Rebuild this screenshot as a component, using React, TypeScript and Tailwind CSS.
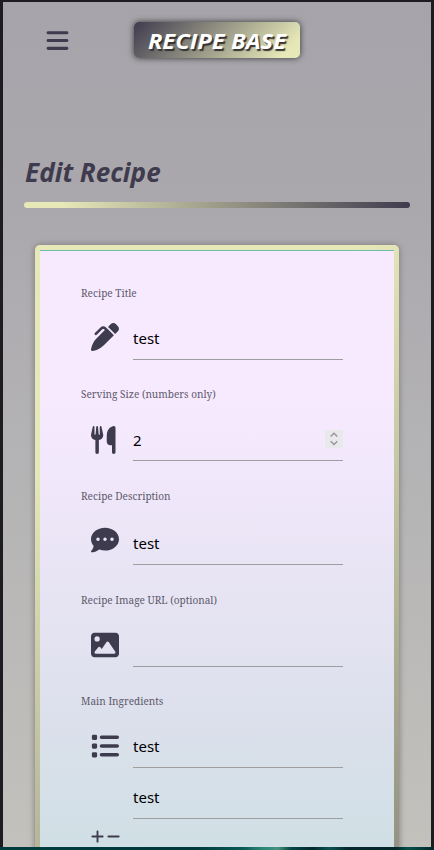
import type { ReactNode } from "react";
import { FaBars, FaPenClip, FaUtensils, FaCommentDots, FaImage, FaList, FaPlus, FaMinus } from "react-icons/fa6";

type FieldProps = {
  label: string;
  icon: ReactNode;
  iconPad: string;
  value: string;
  rowHeight: string;
  gap: string;
  stepper?: boolean;
};

function Field({ label, icon, iconPad, value, rowHeight, gap, stepper }: FieldProps) {
  return (
    <div className={gap}>
      <div className="h-4 whitespace-nowrap pl-[0.6px] font-['Noto_Serif','DejaVu_Serif_Condensed','DejaVu_Serif',serif] text-[10.5px] font-normal leading-4 text-[#5d596b]">
        <span className="inline-block origin-left scale-x-[0.957]">{label}</span>
      </div>
      <div className={`flex ${rowHeight}`}>
        <div className={`ml-[11px] w-[42px] shrink-0 text-[28px] text-[#3f3b4e] ${iconPad}`}>{icon}</div>
        <Line value={value} stepper={stepper} />
      </div>
    </div>
  );
}

function Line({ value, stepper }: { value: string; stepper?: boolean }) {
  return (
    <div className={`flex w-[210px] items-end justify-between border-b border-[#9e9e9e] font-['Noto_Sans',sans-serif] text-[15px] leading-[22px] text-black ${stepper ? "pb-[9px]" : "pb-[10px]"}`}>
      <span>{value}</span>
      {stepper && (
        <span className="mb-[3px] flex size-[18px] items-center justify-center bg-[#e9e8eb]">
          <svg width="8" height="14" viewBox="0 0 8 14" fill="none" stroke="#96939e" strokeWidth="1.4">
            <path d="M.7 4.5 4 1.3l3.3 3.2M.7 9.2 4 12.4l3.3-3.2" />
          </svg>
        </span>
      )}
    </div>
  );
}

export default function App() {
  return (
    <div className="h-[850px] w-[434px] overflow-hidden bg-[linear-gradient(90deg,#003c3e_0%,#00393d_45%,#0a5a56_56%,#268575_60%,#47927f_64%,#064646_67%,#03292e_72%,#0a5250_76%,#03292e_80%,#03262b_91%,#075049_94%,#03262b_100%)]">
      <div className="h-[847px] overflow-hidden border-x-[3px] border-t-2 border-[#1e1c20] bg-[linear-gradient(180deg,#a6a4aa_0%,#aba8ad_24%,#b3b2b4_52%,#c3c1bc_100%)]">
        <header className="flex h-[145px] items-start pl-[42px] pt-[20px]">
          <FaBars className="mt-[5.5px] size-[25px] text-[#3f3b4e]" />
          <div className="ml-16 flex h-9 w-[166px] items-center justify-center rounded-[5px] bg-[linear-gradient(135deg,#3f3b4e_0%,#e6e8b8_90%)] shadow-[0_0_6px_#333]">
            <span className="inline-block scale-x-[1.08] whitespace-nowrap font-['Open_Sans',sans-serif] text-[22px] font-bold italic leading-9 text-white [text-shadow:1.5px_1.5px_1px_#333]">RECIPE BASE</span>
          </div>
        </header>
        <div className="ml-[21px] w-[386px]">
          <h1 className="h-[55px] whitespace-nowrap pl-[1px] pt-[4px] font-['Open_Sans',sans-serif] text-[27px] font-bold italic leading-[41px] text-[#3f3b4e]">
            <span className="inline-block origin-left scale-x-[0.966]">Edit Recipe</span>
          </h1>
          <div className="h-[6px] rounded-[3px] bg-[linear-gradient(90deg,#e6e8b8_0%,#e6e8b8_10%,#3f3b4e_100%)]" />
        </div>
        <main className="ml-8 mt-[37px] h-[1250px] w-[364px] rounded-[5px] bg-[linear-gradient(145deg,#e6e8b8_0%,#e6e8b8_15%,#3f3b4e_100%)] px-[5px] pt-[5px] shadow-[0_0_6px_#777]">
          <form className="h-[1040px] border-t border-[#70bda9] bg-[linear-gradient(180deg,#f7eaff_0%,#f7eaff_14%,#dfe1ee_42%,#cfdfe4_58%,#cde2df_100%)] pl-10 pt-[34px]">
            <Field label="Recipe Title" icon={<FaPenClip />} iconPad="pt-[22px]" value="test" rowHeight="h-[59px]" gap="mb-[26px]" />
            <Field label="Serving Size (numbers only)" icon={<FaUtensils className="h-7 w-[24.5px]" />} iconPad="pt-[24px]" value="2" rowHeight="h-[59px]" gap="mb-[27px]" stepper />
            <Field label="Recipe Description" icon={<FaCommentDots />} iconPad="pt-[22px]" value="test" rowHeight="h-[61px]" gap="mb-[27px]" />
            <Field label="Recipe Image URL (optional)" icon={<FaImage />} iconPad="pt-[22.5px]" value="" rowHeight="h-[59px]" gap="mb-[26px]" />
            <Field label="Main Ingredients" icon={<FaList />} iconPad="pt-[22.5px]" value="test" rowHeight="h-[59px]" gap="" />
            <div className="ml-[53px] flex h-[51px]"><Line value="test" /></div>
            <div className="ml-[10px] mt-[10px] flex gap-[1px] text-[15px] text-[#3f3b4e]">
              <FaPlus />
              <FaMinus />
            </div>
          </form>
        </main>
      </div>
    </div>
  );
}
